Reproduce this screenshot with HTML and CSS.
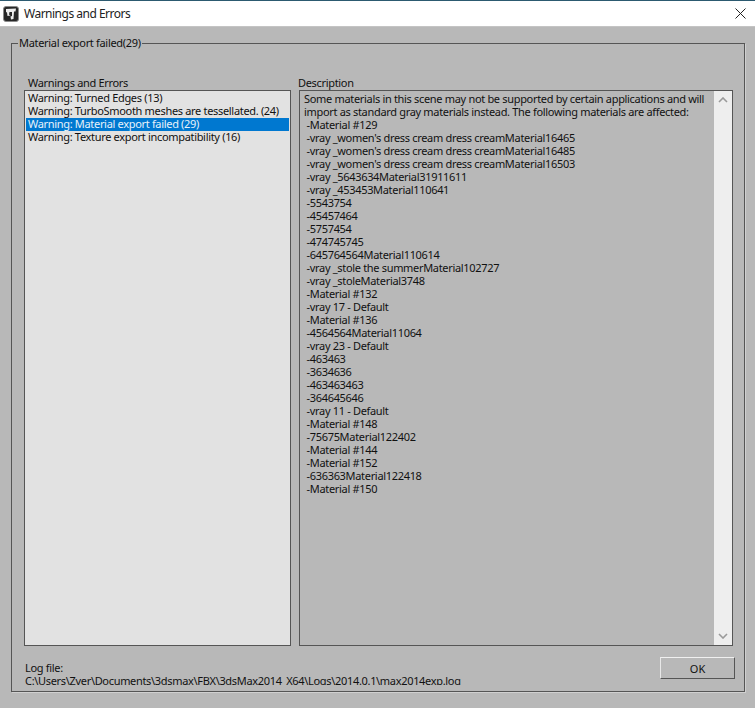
FILE: index.html
```html
<!DOCTYPE html>
<html lang="en">
<head>
<meta charset="utf-8">
<title>Warnings and Errors</title>
<link rel="stylesheet" href="styles.css">
</head>
<body>
<div class="window">
  <header class="titlebar">
    <svg class="app-icon" width="16" height="16" viewBox="0 0 16 16">
      <rect x="0.500" y="0.500" width="15" height="15" rx="2.500" fill="#262626" stroke="#8a8a8a"/>
      <path d="M3 3 L13 2.500 L12.500 5.500 L11 5.500 L10.500 13 L8 13.500 L7.500 10.500 L9 10 L9 6 L6.500 6 L6 8.500 L7.500 9.500 L4.500 10 L4 6.500 L3 6 Z" fill="#ececec"/>
    </svg>
    <span class="title">Warnings and Errors</span>
    <svg class="close" width="11" height="11" viewBox="0 0 11 11"><path d="M0.500 0.500 L10.500 10.500 M10.500 0.500 L0.500 10.500" stroke="#222" stroke-width="1" fill="none"/></svg>
  </header>
  <main class="dialog">
    <section class="group">
      <span class="legend">Material export failed(29)</span>
      <div class="columns">
        <div class="col-left">
          <div class="label label-left">Warnings and Errors</div>
          <ul class="list">
            <li>Warning: Turned Edges (13)</li>
            <li>Warning: TurboSmooth meshes are tessellated. (24)</li>
            <li class="selected">Warning: Material export failed (29)</li>
            <li>Warning: Texture export incompatibility (16)</li>
          </ul>
        </div>
        <div class="col-right">
          <div class="label label-right">Description</div>
          <div class="desc-box">
            <div class="desc-text">Some materials in this scene may not be supported by certain applications and will
import as standard gray materials instead. The following materials are affected:
 -Material #129
 -vray _women's dress cream dress creamMaterial16465
 -vray _women's dress cream dress creamMaterial16485
 -vray _women's dress cream dress creamMaterial16503
 -vray _5643634Material31911611
 -vray _453453Material110641
 -5543754
 -45457464
 -5757454
 -474745745
 -645764564Material110614
 -vray _stole the summerMaterial102727
 -vray _stoleMaterial3748
 -Material #132
 -vray 17 - Default
 -Material #136
 -4564564Material11064
 -vray 23 - Default
 -463463
 -3634636
 -463463463
 -364645646
 -vray 11 - Default
 -Material #148
 -75675Material122402
 -Material #144
 -Material #152
 -636363Material122418
 -Material #150</div>
            <div class="scrollbar">
              <svg width="10" height="6" viewBox="0 0 10 6"><path d="M1 5 L5 1 L9 5" stroke="#9a9a9a" stroke-width="1.600" fill="none"/></svg>
              <svg width="10" height="6" viewBox="0 0 10 6"><path d="M1 1 L5 5 L9 1" stroke="#9a9a9a" stroke-width="1.600" fill="none"/></svg>
            </div>
          </div>
        </div>
      </div>
      <div class="footer">
        <div class="log">
          <div class="log-label">Log file:</div>
          <div class="log-path">C:\Users\Zver\Documents\3dsmax\FBX\3dsMax2014_X64\Logs\2014.0.1\max2014exp.log</div>
        </div>
        <button class="ok">OK</button>
      </div>
    </section>
  </main>
</div>
</body>
</html>
```
FILE: styles.css
```css
* { box-sizing: border-box; }
html, body { margin: 0; padding: 0; }
body {
  width: 755px;
  height: 708px;
  overflow: hidden;
  font-family: "Noto Sans", "Liberation Sans", sans-serif;
  font-size: 11px;
  letter-spacing: -0.32px;
  color: #111;
  background: #b8b8b8;
}
.window { display: flex; flex-direction: column; height: 708px; }
.titlebar {
  height: 27px;
  flex: none;
  display: flex;
  align-items: center;
  padding: 0 9px 0 3px;
  background: #fff;
  border-top: 1px solid #2c5a70;
  border-bottom: 1px solid #c4c4c4;
}
.app-icon { flex: none; }
.title { margin-left: 5px; font-size: 12px; letter-spacing: -0.5px; color: #222; flex: 1; }
.close { flex: none; }
.dialog { flex: 1; padding: 16px 10px 16px 11px; background: #b8b8b8; }
.group {
  position: relative;
  height: 100%;
  border: 1px solid #555;
  box-shadow: 1px 1px 0 #d0d0d0;
  padding: 33px 9px 0 12px;
  display: flex;
  flex-direction: column;
}
.legend {
  position: absolute;
  left: 6px;
  top: -8px;
  padding: 0 1px;
  background: #b8b8b8;
  line-height: 14px;
}
.columns { display: flex; gap: 8px; height: 569px; flex: none; }
.col-left { width: 267px; display: flex; flex-direction: column; }
.col-right { width: 434px; display: flex; flex-direction: column; }
.label { height: 13px; line-height: 11px; }
.label-left { padding-left: 4px; }
.label-right { margin-left: -1px; }
.list {
  list-style: none;
  margin: 0;
  padding: 1px;
  flex: 1;
  background: #e2e2e2;
  border: 1px solid #555;
}
.list li { height: 13px; line-height: 11px; padding-left: 2px; white-space: nowrap; }
.list .selected { background: #0078d0; color: #e8f2fa; }
.desc-box {
  flex: 1;
  display: flex;
  background: #b8b8b8;
  border: 1px solid #555;
  min-height: 0;
}
.desc-text {
  flex: 1;
  padding: 1px 4px;
  white-space: pre;
  line-height: 13px;
  overflow: hidden;
}
.scrollbar {
  flex: none;
  width: 18px;
  background: #eeeeee;
  display: flex;
  flex-direction: column;
  justify-content: space-between;
  align-items: center;
  padding: 6px 0;
}
.scrollbar svg { display: block; }
.footer { display: flex; justify-content: space-between; align-items: flex-start; padding-top: 11px; flex: 1; min-height: 0; }
.log { padding-top: 4px; }
.log-label { line-height: 13px; padding-left: 1px; white-space: nowrap; }
.log-path { line-height: 13px; height: 11px; padding-left: 1px; white-space: nowrap; overflow: hidden; }
.ok {
  width: 75px;
  height: 22px;
  margin-right: 0;
  font: inherit;
  font-size: 11px;
  letter-spacing: 0;
  color: #111;
  background: #b8b8b8;
  border: 1px solid #555;
  border-top-color: #f0f0f0;
  border-left-color: #e8e8e8;
  padding: 0;
}
```
